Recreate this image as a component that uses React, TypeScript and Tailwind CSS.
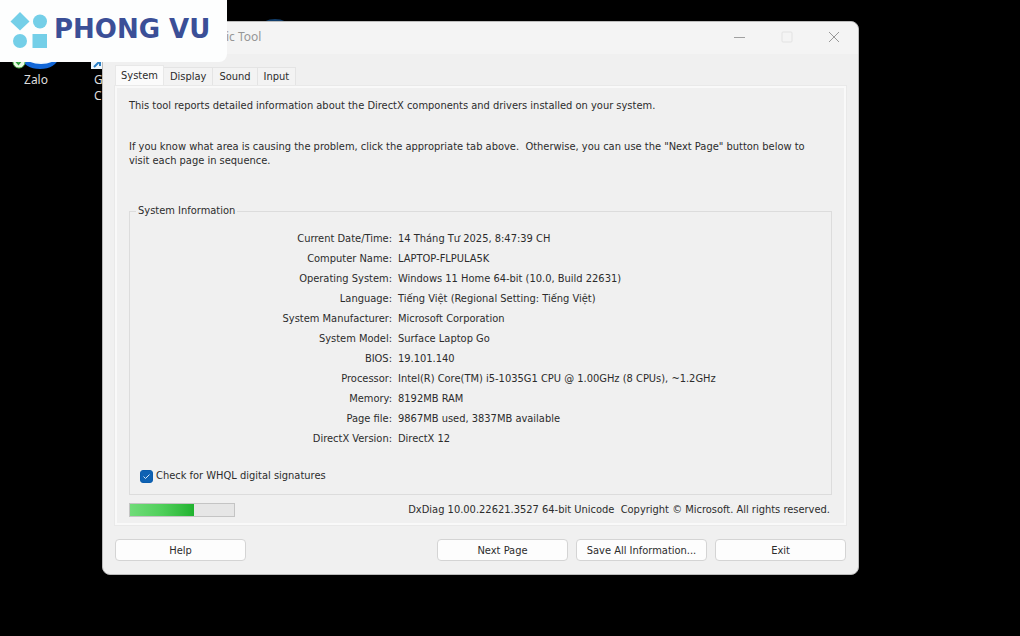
import { useState } from "react";

const tabs = ["System", "Display", "Sound", "Input"];

const systemInfo = [
  { label: "Current Date/Time:", value: "14 Tháng Tư 2025, 8:47:39 CH" },
  { label: "Computer Name:", value: "LAPTOP-FLPULA5K" },
  { label: "Operating System:", value: "Windows 11 Home 64-bit (10.0, Build 22631)" },
  { label: "Language:", value: "Tiếng Việt (Regional Setting: Tiếng Việt)" },
  { label: "System Manufacturer:", value: "Microsoft Corporation" },
  { label: "System Model:", value: "Surface Laptop Go" },
  { label: "BIOS:", value: "19.101.140" },
  { label: "Processor:", value: "Intel(R) Core(TM) i5-1035G1 CPU @ 1.00GHz (8 CPUs), ~1.2GHz" },
  { label: "Memory:", value: "8192MB RAM" },
  { label: "Page file:", value: "9867MB used, 3837MB available" },
  { label: "DirectX Version:", value: "DirectX 12" },
];

function Logo() {
  return (
    <div className="absolute top-0 left-0 z-20 flex h-[62px] w-[227px] items-center gap-[6px] rounded-br-lg bg-[#fdfefe] pl-[10px]">
      <svg className="shrink-0" width="38" height="38" viewBox="0 0 38 38" fill="#74cfe8">
        <path d="M10 0 19.500 9.500 10 18.500 .5 9.500Z" />
        <circle cx="30" cy="9.500" r="7" />
        <circle cx="10" cy="29" r="7" />
        <path d="M22.500 22h14.500v14H22.500z" />
      </svg>
      <span className="mb-1 font-['DejaVu_Sans','sans-serif'] text-[26px] leading-none font-bold whitespace-nowrap text-[#3b4f97]">
        PHONG VU
      </span>
    </div>
  );
}

function DesktopIcons() {
  return (
    <div className="absolute top-0 left-0 font-['Noto_Sans','sans-serif'] text-[12px] leading-4 text-[#dedede]">
      <svg width="300" height="72" viewBox="0 0 300 72">
        <ellipse cx="40" cy="58" rx="18" ry="11" fill="#1267d8" />
        <ellipse cx="41" cy="57" rx="15" ry="7" fill="#f4faff" />
        <circle cx="19" cy="62" r="6" fill="#eafbe4" stroke="#5ab953" />
        <path d="m16 61 2.500 3 4-5" fill="none" stroke="#2f9e3b" strokeWidth="2" />
        <path d="M91 55h13v14H91z" fill="#eef6fc" />
        <path d="m94 67 5-5M95 61h5v5" fill="none" stroke="#2b7fc4" strokeWidth="2" />
        <ellipse cx="275" cy="27" rx="14" ry="8" fill="#123e6b" />
      </svg>
      <div className="flex">
        <span className="w-[72px] text-center">Zalo</span>
        <span className="pl-[22px]">
          G
          <br />C
        </span>
      </div>
    </div>
  );
}

function TitleBar() {
  return (
    <header className="flex h-8 items-center justify-between rounded-t-lg bg-[#f4f4f4] pr-[18px] pb-[3px] pl-[123px] text-[#969696]">
      <h1 className="font-['Noto_Sans','sans-serif'] text-[12px]">ic Tool</h1>
      <div className="flex items-center gap-[35px]">
        <button aria-label="Minimize">
          <svg width="12" height="12" viewBox="0 0 12 12" fill="none" stroke="#a0a0a0">
            <path d="M0 6.500h11" />
          </svg>
        </button>
        <button aria-label="Maximize" disabled>
          <svg width="12" height="12" viewBox="0 0 12 12" fill="none" stroke="#e2e2e2">
            <rect x="1" y="1" width="10" height="10" rx="1" />
          </svg>
        </button>
        <button aria-label="Close">
          <svg width="12" height="12" viewBox="0 0 12 12" fill="none" stroke="#999">
            <path d="m1 1 10 10M11 1 1 11" />
          </svg>
        </button>
      </div>
    </header>
  );
}

function DialogButton({ children }: { children: string }) {
  return (
    <button className="h-[22px] w-[131px] rounded border border-[#d4d4d4] bg-[#fdfdfd] text-center leading-none">
      {children}
    </button>
  );
}

export default function App() {
  const [activeTab, setActiveTab] = useState("System");
  const [checkSignatures, setCheckSignatures] = useState(true);

  return (
    <div className="relative min-h-screen bg-black pt-[21px] pr-[161px] pb-[61px] pl-[102px] font-['DejaVu_Sans_Condensed','DejaVu_Sans','sans-serif'] text-[11px] leading-[14px] text-[#2c2c2c]">
      <DesktopIcons />
      <Logo />

      <main className="relative z-10 rounded-lg border border-[#bcbcbc] bg-[#f0f0f0]">
        <TitleBar />

        <div className="px-3 pt-[11px] pb-[13px]">
          <div role="tablist" className="flex items-end">
            {tabs.map((tab) => (
              <button
                key={tab}
                role="tab"
                aria-selected={tab === activeTab}
                onClick={() => setActiveTab(tab)}
                className={
                  tab === activeTab
                    ? "h-[21px] border border-b-0 border-[#e8e8e8] bg-[#fbfbfb] px-[5px]"
                    : "h-[19px] border border-b-0 border-l-0 border-[#e4e4e4] bg-[#f3f3f3] px-[6px]"
                }
              >
                {tab}
              </button>
            ))}
          </div>

          <section className="border-2 border-[#f9f9f9] px-3 pt-[11px] pb-[6px] outline outline-[#e9e9e9]">
            <p>
              This tool reports detailed information about the DirectX components and drivers
              installed on your system.
            </p>
            <p className="mt-[27px] pr-4">
              If you know what area is causing the problem, click the appropriate tab above.&nbsp;
              Otherwise, you can use the "Next Page" button below to visit each page in sequence.
            </p>

            <fieldset className="mt-[36px] border border-[#dcdcdc] px-[6px] pb-[11px]">
              <legend className="px-[2px]">System Information</legend>
              <dl className="mt-[11px] leading-5">
                {systemInfo.map((row) => (
                  <div key={row.label} className="flex gap-[6px]">
                    <dt className="w-[256px] shrink-0 text-right">{row.label}</dt>
                    <dd>{row.value}</dd>
                  </div>
                ))}
              </dl>
              <label className="mt-[20px] ml-1 flex items-center gap-[3px]">
                <span className="relative flex">
                  <input
                    type="checkbox"
                    checked={checkSignatures}
                    onChange={(e) => setCheckSignatures(e.target.checked)}
                    className="size-[13px] appearance-none rounded-[3px] border border-[#0a5cad] bg-white checked:bg-[#0f62b3]"
                  />
                  {checkSignatures && (
                    <svg
                      className="pointer-events-none absolute inset-0"
                      width="13"
                      height="13"
                      viewBox="0 0 13 13"
                      fill="none"
                      stroke="#d3e6f7"
                    >
                      <path d="m3.500 6.500 2 2 4-4" />
                    </svg>
                  )}
                </span>
                Check for WHQL digital signatures
              </label>
            </fieldset>

            <div className="mt-2 flex items-center justify-between pr-[2px]">
              <div
                role="progressbar"
                aria-label="Progress"
                aria-valuenow={62}
                className="h-[14px] w-[106px] border border-[#c4c4c4] bg-[#e6e6e6]"
              >
                <div className="h-full w-[62%] bg-linear-to-r from-[#6fdc78] via-[#4fcf5a] to-[#1fb32f]" />
              </div>
              <p>
                DxDiag 10.00.22621.3527 64-bit Unicode&nbsp; Copyright © Microsoft. All rights
                reserved.
              </p>
            </div>
          </section>

          <footer className="mt-[14px] flex gap-2">
            <DialogButton>Help</DialogButton>
            <div className="ml-auto flex gap-2">
              <DialogButton>Next Page</DialogButton>
              <DialogButton>Save All Information...</DialogButton>
              <DialogButton>Exit</DialogButton>
            </div>
          </footer>
        </div>
      </main>
    </div>
  );
}
